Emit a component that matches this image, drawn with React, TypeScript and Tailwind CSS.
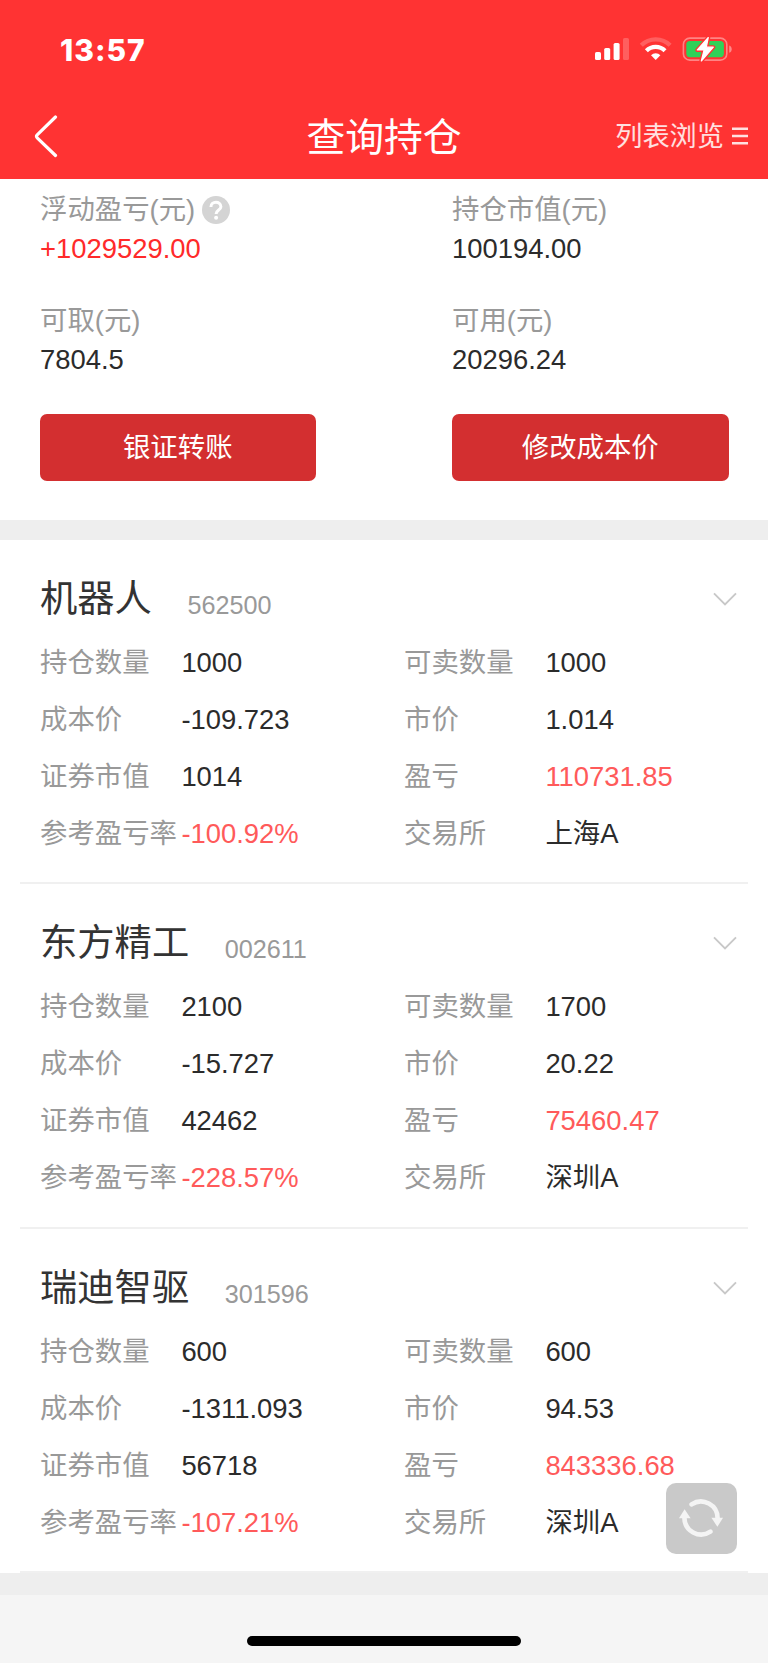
import React from "react";

type Holding = {
  name: string;
  code: string;
  rows: [string, string, string, string][];
};

const holdings: Holding[] = [
  {
    name: "机器人",
    code: "562500",
    rows: [
      ["持仓数量", "1000", "可卖数量", "1000"],
      ["成本价", "-109.723", "市价", "1.014"],
      ["证券市值", "1014", "盈亏", "110731.85"],
      ["参考盈亏率", "-100.92%", "交易所", "上海A"],
    ],
  },
  {
    name: "东方精工",
    code: "002611",
    rows: [
      ["持仓数量", "2100", "可卖数量", "1700"],
      ["成本价", "-15.727", "市价", "20.22"],
      ["证券市值", "42462", "盈亏", "75460.47"],
      ["参考盈亏率", "-228.57%", "交易所", "深圳A"],
    ],
  },
  {
    name: "瑞迪智驱",
    code: "301596",
    rows: [
      ["持仓数量", "600", "可卖数量", "600"],
      ["成本价", "-1311.093", "市价", "94.53"],
      ["证券市值", "56718", "盈亏", "843336.68"],
      ["参考盈亏率", "-107.21%", "交易所", "深圳A"],
    ],
  },
];

function StatusIcons() {
  return (
    <svg width="140" height="28" viewBox="0 0 140 28" fill="none">
      <g fill="#fff">
        <rect x="0" y="16" width="6" height="8" rx="1.6" />
        <rect x="9.2" y="12" width="6" height="12" rx="1.6" />
        <rect x="18.6" y="7" width="6" height="17" rx="1.6" />
        <rect x="28" y="2" width="6" height="22" rx="1.6" opacity="0.22" />
      </g>
      <path d="M46.3 9.3 A20.5 20.5 0 0 1 75.1 9.3" stroke="#fff" strokeOpacity="0.22" strokeWidth="4.4" />
      <path d="M51.4 14.7 A13 13 0 0 1 70 14.7" stroke="#fff" strokeWidth="4.2" />
      <path d="M60.7 24 L56 19.2 A6.6 6.6 0 0 1 65.4 19.2 Z" fill="#fff" />
      <rect x="88.4" y="2.1" width="43.4" height="22" rx="6.4" stroke="#fff" strokeOpacity="0.4" strokeWidth="1.6" />
      <path d="M134.2 9.5 C137.6 10.6 137.6 15.8 134.2 16.8 Z" fill="#fff" fillOpacity="0.42" />
      <rect x="91.3" y="5" width="37.6" height="16.2" rx="3.6" fill="#30d158" />
      <path d="M113.3 1.5 L102.3 14 H109.1 L106.3 25 L118.3 11.2 H111.3 Z" fill="#fff" stroke="#ff3333" strokeWidth="4" strokeLinejoin="round" />
      <path d="M113.3 1.5 L102.3 14 H109.1 L106.3 25 L118.3 11.2 H111.3 Z" fill="#fff" stroke="#fff" strokeWidth="1.2" strokeLinejoin="round" />
    </svg>
  );
}

function Header() {
  return (
    <header className="h-[179px] bg-[#ff3333] text-white">
      <div className="flex h-[94px] items-center justify-between pt-[5px] pl-[60px] pr-[33px]">
        <span className="font-['Inter'] text-[30px] leading-[36px] font-extrabold tracking-[1px]">13:57</span>
        <StatusIcons />
      </div>
      <div className="grid h-[85px] grid-cols-[1fr_auto_1fr] items-center pb-px">
        <svg className="ml-[34px]" width="26" height="46" viewBox="0 0 26 46" fill="none">
          <path d="M21.5 4 L3.2 21.8 Q1.8 23.3 3.2 24.8 L21.5 42.5" stroke="#fff" strokeWidth="3.2" strokeLinecap="round" strokeLinejoin="round" />
        </svg>
        <h1 className="pt-[4px] text-[38.8px] leading-[46px]">查询持仓</h1>
        <div className="flex items-center justify-end gap-[8px] pr-5 text-white/85">
          <span className="pt-[2px] text-[27.2px] leading-[40px]">列表浏览</span>
          <svg width="16" height="20" viewBox="0 0 16 20">
            <path d="M0 2.8H16M0 10H16M0 17.2H16" stroke="currentColor" strokeWidth="2.4" />
          </svg>
        </div>
      </div>
    </header>
  );
}

function Stat({ label, value, up, help }: { label: string; value: string; up?: boolean; help?: boolean }) {
  return (
    <div className="h-[110.5px]">
      <div className="flex h-10 items-center text-[#999]">
        <span className="leading-10">{label}</span>
        {help && (
          <svg className="mb-[1px] ml-[7px]" width="28" height="28" viewBox="0 0 28 28" fill="none">
            <circle cx="14" cy="14" r="14" fill="#d4d4d4" />
            <path d="M8.9 11 C8.9 4.7 18.9 4.7 18.9 10.8 C18.9 14.2 14.1 14 14.1 18" stroke="#fff" strokeWidth="3" />
            <circle cx="14.1" cy="21.8" r="2" fill="#fff" />
          </svg>
        )}
      </div>
      <div className={up ? "leading-[38px] text-[#ff2a2a]" : "leading-[38px] text-[#2b2b2b]"}>{value}</div>
    </div>
  );
}

function HoldingCard({ item }: { item: Holding }) {
  return (
    <section className="h-[344.5px] pt-[26px]">
      <div className="flex h-[65px] items-center justify-between pl-10 pr-[31.5px]">
        <div className="flex items-baseline gap-[35.5px]">
          <h2 className="text-[37.3px] leading-[60px] text-[#333]">{item.name}</h2>
          <span className="relative top-[2px] text-[25.2px] text-[#999]">{item.code}</span>
        </div>
        <svg width="24" height="14" viewBox="0 0 24 14" fill="none">
          <path d="M1 1.4 L12 12.4 L23 1.4" stroke="#c8c8c8" strokeWidth="1.9" />
        </svg>
      </div>
      <div className="pt-[3px] pl-10">
        {item.rows.map((row, i) => (
          <div key={row[0]} className="grid h-[57px] grid-cols-[141.4px_222.6px_141.4px_1fr] items-center whitespace-nowrap text-[#2b2b2b]">
            <span className="text-[#999]">{row[0]}</span>
            <span className={i === 3 ? "text-[#ff5a5a]" : ""}>{row[1]}</span>
            <span className="text-[#999]">{row[2]}</span>
            <span className={i === 2 ? "text-[#ff5a5a]" : ""}>{row[3]}</span>
          </div>
        ))}
      </div>
      <div className="mx-5 mt-5 h-0.5 bg-[#f0f0f0]" />
    </section>
  );
}

export default function App() {
  return (
    <div className="relative flex h-[1663px] w-[768px] flex-col overflow-hidden bg-[#f5f5f5] font-['Liberation_Sans','Noto_Sans_CJK_SC',sans-serif] text-[27.4px]">
      <Header />
      <section className="h-[341px] bg-white pt-[11px]">
        <div className="grid grid-cols-[412px_1fr] pl-10">
          <Stat label="浮动盈亏(元)" value="+1029529.00" up help />
          <Stat label="持仓市值(元)" value="100194.00" />
          <Stat label="可取(元)" value="7804.5" />
          <Stat label="可用(元)" value="20296.24" />
        </div>
        <div className="mt-[2.5px] flex justify-between px-[39.5px] text-white">
          <button className="h-[67px] w-[276.5px] rounded-[7px] bg-[#d32f30] pt-px">银证转账</button>
          <button className="h-[67px] w-[276.5px] rounded-[7px] bg-[#d32f30] pt-px">修改成本价</button>
        </div>
      </section>
      <div className="h-5 bg-[#eee]" />
      <main className="h-[1033px] bg-white">
        {holdings.map((item) => (
          <HoldingCard key={item.code} item={item} />
        ))}
      </main>
      <div className="h-[22px] bg-[#eee]" />
      <div className="mx-auto mt-[41px] h-[10px] w-[274px] rounded-full bg-black" />
      <button className="absolute top-[1482.5px] left-[665.5px] flex h-[71px] w-[71px] items-center justify-center rounded-[10px] bg-[#c9c9c9]">
        <svg width="44" height="40" viewBox="0 0 44 40" fill="none">
          <path d="M12.6 6.4 A16.7 16.7 0 0 1 38.6 20.5" stroke="#f4f4f4" strokeWidth="4.6" strokeLinecap="round" />
          <path d="M32.4 19.8 L38.4 28.8 L44 19.8 Z" fill="#f4f4f4" />
          <path d="M31.4 33.6 A16.7 16.7 0 0 1 5.4 19.5" stroke="#f4f4f4" strokeWidth="4.6" strokeLinecap="round" />
          <path d="M0 20.2 L5.6 11.2 L11.6 20.2 Z" fill="#f4f4f4" />
        </svg>
      </button>
    </div>
  );
}
